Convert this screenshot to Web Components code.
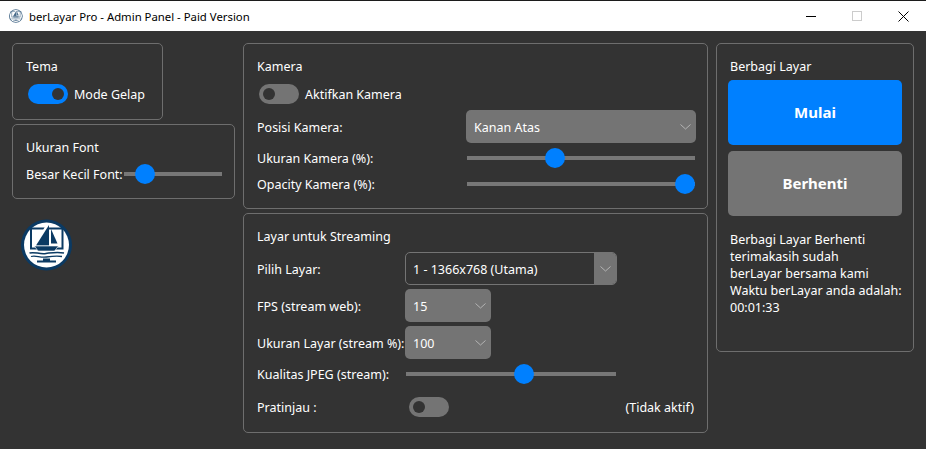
<!DOCTYPE html>
<html>
<head>
<meta charset="utf-8">
<title>berLayar Pro</title>
<style>
  html, body { margin: 0; height: 100%; background: #333; overflow: hidden; }
</style>
</head>
<body>
<ber-app></ber-app>
<script>
// logo: ring + monitor + sailboat, also used small for the title bar
class BerLogo extends HTMLElement {
  connectedCallback() {
    const size = this.getAttribute('size') || 52;
    this.attachShadow({ mode: 'open' }).innerHTML = `
      <style>:host { display: block; width: ${size}px; height: ${size}px; } svg { display: block; }</style>
      <svg width="${size}" height="${size}" viewBox="0 0 52 52">
        <circle cx="25.5" cy="26" r="25.5" fill="#0b3a63"/>
        <circle cx="25.5" cy="26" r="22.5" fill="#fff"/>
        <path d="M10 9.5H41.5V29.5H10Z" fill="none" stroke="#0b3a63" stroke-width="2"/>
        <path d="M26.5 5.5V26.5H15Z" fill="#fff" stroke="#fff" stroke-width="2.5"/>
        <path d="M28 6V26.5H15Z" fill="#0b3a63"/>
        <path d="M30 10L36.5 24.5H30Z" fill="#0b3a63"/>
        <path d="M13.5 27H37.5L33.5 32H17Z" fill="#0b3a63" stroke="#fff" stroke-width=".6"/>
        <path d="M8.5 34C14 32.5 18 35.5 25 34.5S36 32.5 43 34" fill="none" stroke="#0b3a63" stroke-width="1.5"/>
        <path d="M10 37.5C15 36 19 39 25.5 38S36 36.5 41 37.5" fill="none" stroke="#0b3a63" stroke-width="1.3"/>
        <path d="M22 39.5H29V41.5H35V43.5H16V41.5H22Z" fill="#0b3a63"/>
      </svg>`;
  }
}
customElements.define('ber-logo', BerLogo);

class BerTitlebar extends HTMLElement {
  constructor() {
    super();
    this.attachShadow({ mode: 'open' }).innerHTML = `
      <style>
        :host { display: flex; align-items: center; height: 30px; background: #fff; border-top: 1px solid #1c1c1c;
                color: #000; font: 11.35px "Noto Sans", sans-serif; }
        ber-logo { margin: 0 6px 0 9px; opacity: .75; }
        .name { flex: 1; white-space: nowrap; }
        .btn { width: 46px; height: 30px; display: flex; align-items: center; justify-content: center; }
      </style>
      <ber-logo size="14"></ber-logo>
      <span class="name"><slot></slot></span>
      <span class="btn"><svg width="10" height="10" viewBox="0 0 10 10"><path d="M0 5.5H10" stroke="#000"/></svg></span>
      <span class="btn"><svg width="10" height="10" viewBox="0 0 10 10"><rect x=".5" y=".5" width="9" height="9" fill="none" stroke="#ccc"/></svg></span>
      <span class="btn"><svg width="11" height="11" viewBox="0 0 11 11"><path d="M.5 .5L10.5 10.5M10.5 .5L.5 10.5" stroke="#000"/></svg></span>`;
  }
}
customElements.define('ber-titlebar', BerTitlebar);

// bordered group box with a caption
class BerPanel extends HTMLElement {
  constructor() {
    super();
    this.attachShadow({ mode: 'open' }).innerHTML = `
      <style>
        :host { display: flex; flex-direction: column; box-sizing: border-box; border: 1px solid #6e6e6e;
                border-radius: 5px; padding: 14px 11px 0 13px; }
        .cap { line-height: 17px; height: 17px; }
      </style>
      <div class="cap"></div>
      <slot></slot>`;
  }
  connectedCallback() {
    this.shadowRoot.querySelector('.cap').textContent = this.getAttribute('caption');
  }
}
customElements.define('ber-panel', BerPanel);

class BerToggle extends HTMLElement {
  constructor() {
    super();
    this.attachShadow({ mode: 'open' }).innerHTML = `
      <style>
        :host { display: flex; align-items: center; height: 20px; }
        .track { width: 40px; height: 20px; border-radius: 10px; background: #747474; box-sizing: border-box;
                 padding: 4px; display: flex; flex: none; }
        .knob { width: 12px; height: 12px; border-radius: 50%; background: #333; }
        :host([on]) .track { background: #0080ff; justify-content: flex-end; }
        .label { margin-left: 6px; white-space: nowrap; }
      </style>
      <div class="track"><div class="knob"></div></div>
      <span class="label"><slot></slot></span>`;
  }
}
customElements.define('ber-toggle', BerToggle);

class BerSlider extends HTMLElement {
  constructor() {
    super();
    this.attachShadow({ mode: 'open' }).innerHTML = `
      <style>
        :host { display: block; height: 20px; }
        input { -webkit-appearance: none; appearance: none; display: block; width: 100%; height: 20px; margin: 0;
                background: transparent; outline: none; }
        input::-webkit-slider-runnable-track { height: 4px; background: #777; }
        input::-webkit-slider-thumb { -webkit-appearance: none; width: 20px; height: 20px; margin-top: -8px;
                border-radius: 50%; background: #0080ff; }
      </style>
      <input type="range" min="0" max="100" step="0.1">`;
  }
  connectedCallback() {
    this.shadowRoot.querySelector('input').value = this.getAttribute('value');
  }
}
customElements.define('ber-slider', BerSlider);

class BerSelect extends HTMLElement {
  constructor() {
    super();
    this.attachShadow({ mode: 'open' }).innerHTML = `
      <style>
        :host { display: flex; align-items: center; box-sizing: border-box; height: 33px; border-radius: 5px;
                background: #747474; padding-left: 8px; overflow: hidden; }
        .text { flex: 1; white-space: nowrap; padding-top: 1px; }
        .arrow { flex: none; width: 22px; height: 100%; display: flex; align-items: center; justify-content: center; }
        svg { display: block; }
        :host([editable]) { background: none; border: 1px solid #747474; padding-left: 7px; }
        :host([editable]) .arrow { background: #747474; }
      </style>
      <span class="text"><slot></slot></span>
      <span class="arrow"><svg width="11" height="6" viewBox="0 0 11 6"><path d="M.5 .5L5.5 5L10.5 .5" fill="none" stroke="#b4b4b4"/></svg></span>`;
  }
}
customElements.define('ber-select', BerSelect);

class BerButton extends HTMLElement {
  constructor() {
    super();
    this.attachShadow({ mode: 'open' }).innerHTML = `
      <style>
        :host { display: flex; align-items: center; justify-content: center; height: 65px; border-radius: 5px;
                background: #747474; color: #fff; font-weight: 700; font-size: 15px; }
        :host([primary]) { background: #0080ff; }
      </style>
      <slot></slot>`;
  }
}
customElements.define('ber-button', BerButton);

// the whole window
class BerApp extends HTMLElement {
  constructor() {
    super();
    this.attachShadow({ mode: 'open' }).innerHTML = `
      <style>
        :host { display: block; width: 926px; height: 449px; background: #333; color: #fff;
                font: 12.5px/17px "Noto Sans", sans-serif; }
        main { display: grid; grid-template-columns: 223px 465px 198px; column-gap: 8px; padding: 12px 0 0 12px; }
        .col { display: flex; flex-direction: column; row-gap: 4px; }
        .row { display: grid; align-items: center; }
        .tall > span { padding-top: 1px; }
        .tema { width: 151px; height: 77px; }
        .font { height: 75px; }
        .kamera { height: 166px; }
        .kamera .row { grid-template-columns: 209px 1fr; }
        .layar { height: 220px; }
        .layar .row { grid-template-columns: 148px 1fr; }
        .share { height: 309px; }
        .share ber-button { margin-left: -2px; }
        .on-left { margin: 9px 0 0 2px; }
        .msg { margin-top: 15px; white-space: pre-line; }
        ber-logo { margin: 16px 0 0 9px; }
      </style>
      <ber-titlebar>berLayar Pro - Admin Panel - Paid Version</ber-titlebar>
      <main>
        <div class="col">
          <ber-panel class="tema" caption="Tema">
            <ber-toggle class="on-left" on>Mode Gelap</ber-toggle>
          </ber-panel>
          <ber-panel class="font" caption="Ukuran Font">
            <div class="row" style="grid-template-columns:98px 98px;margin-top:8px">
              <span style="white-space:nowrap">Besar Kecil Font:</span>
              <ber-slider value="14"></ber-slider>
            </div>
          </ber-panel>
          <ber-logo></ber-logo>
        </div>
        <div class="col">
          <ber-panel class="kamera" caption="Kamera">
            <ber-toggle class="on-left">Aktifkan Kamera</ber-toggle>
            <div class="row tall" style="margin-top:6px">
              <span>Posisi Kamera:</span>
              <ber-select>Kanan Atas</ber-select>
            </div>
            <div class="row" style="margin-top:5px">
              <span>Ukuran Kamera (%):</span>
              <ber-slider value="37.5" style="margin:0 1px"></ber-slider>
            </div>
            <div class="row" style="margin-top:6px">
              <span>Opacity Kamera (%):</span>
              <ber-slider value="100" style="margin:0 1px"></ber-slider>
            </div>
          </ber-panel>
          <ber-panel class="layar" caption="Layar untuk Streaming">
            <div class="row tall" style="margin-top:7px">
              <span>Pilih Layar:</span>
              <ber-select editable style="width:212px">1 - 1366x768 (Utama)</ber-select>
            </div>
            <div class="row tall" style="margin-top:4px">
              <span>FPS (stream web):</span>
              <ber-select style="width:86px">15</ber-select>
            </div>
            <div class="row tall" style="margin-top:4px">
              <span style="white-space:nowrap">Ukuran Layar (stream %):</span>
              <ber-select style="width:86px">100</ber-select>
            </div>
            <div class="row" style="margin-top:5px">
              <span>Kualitas JPEG (stream):</span>
              <ber-slider value="56.8" style="width:210px;margin-left:1px"></ber-slider>
            </div>
            <div class="row" style="margin-top:13px;grid-template-columns:152px 1fr auto">
              <span>Pratinjau :</span>
              <ber-toggle></ber-toggle>
              <span style="margin-right:2px">(Tidak aktif)</span>
            </div>
          </ber-panel>
        </div>
        <div class="col">
          <ber-panel class="share" caption="Berbagi Layar">
            <ber-button primary style="margin-top:5px">Mulai</ber-button>
            <ber-button style="margin-top:6px">Berhenti</ber-button>
            <div class="msg">Berbagi Layar Berhenti
terimakasih sudah
berLayar bersama kami
Waktu berLayar anda adalah:
00:01:33</div>
          </ber-panel>
        </div>
      </main>`;
  }
}
customElements.define('ber-app', BerApp);
</script>
</body>
</html>
